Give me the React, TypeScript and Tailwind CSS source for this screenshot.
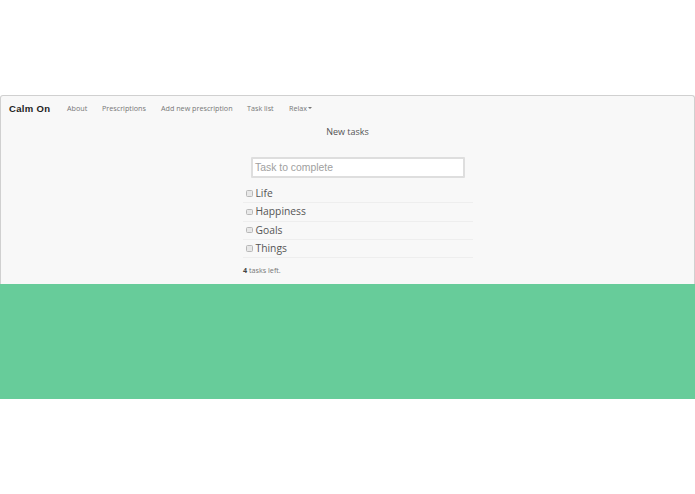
export default function App() {
  const tasks = ["Life", "Happiness", "Goals", "Things"];
  return (
    <div className="w-[695px] h-[494px] bg-white overflow-hidden font-['Open_Sans',sans-serif]">
      <div className="h-[95px]" />
      <div className="h-[189px] bg-[#f8f8f8] border border-[#d0d0d0] border-b-0 rounded-t-[3px] flex flex-col">
        <nav className="h-[26px] flex items-center pl-[8px] text-[7.2px] text-[#777777] whitespace-nowrap">
          <span className="w-[58px] font-['Liberation_Sans',sans-serif] font-bold text-[9.5px] text-[#222222] tracking-[0.35px]">Calm On</span>
          <span className="w-[35px] mb-[1px]">About</span>
          <span className="w-[59px] mb-[1px]">Prescriptions</span>
          <span className="w-[86px] mb-[1px]">Add new prescription</span>
          <span className="w-[42px] mb-[1px]">Task list</span>
          <span className="flex items-center gap-[1px] mb-[1px]">
            Relax
            <span className="w-0 h-0 border-x-[2px] border-x-transparent border-t-[2px] border-t-[#777777]" />
          </span>
        </nav>
        <div className="text-center text-[9px] leading-[14px] text-[#555555] mt-[3px]">New tasks</div>
        <div className="ml-[242px] w-[230px] flex flex-col mt-[18px]">
          <div className="ml-[8px] w-[214px] h-[21px] bg-white border-2 border-[#dedede] rounded-[1px] flex items-center pl-[2px] font-['Liberation_Sans',sans-serif] text-[10.4px] text-[#a0a0a0]">
            Task to complete
          </div>
          <ul className="mt-[7px]">
            {tasks.map((t) => (
              <li key={t} className="h-[18.3px] flex items-center border-b border-[#eeeeee] pl-[3px] gap-[3px] text-[10.3px] text-[#555555]">
                <span className="w-[6.5px] h-[6.5px] bg-[#e8e8e8] border border-[#b8b8b8] rounded-[1.5px]" />
                <span>{t}</span>
              </li>
            ))}
          </ul>
          <div className="mt-[6px] text-[7.2px] leading-[12px] text-[#777777]">
            <strong className="text-[#444444]">4</strong> tasks left.
          </div>
        </div>
      </div>
      <div className="h-[115px] bg-[#67cc9a]" />
    </div>
  );
}
